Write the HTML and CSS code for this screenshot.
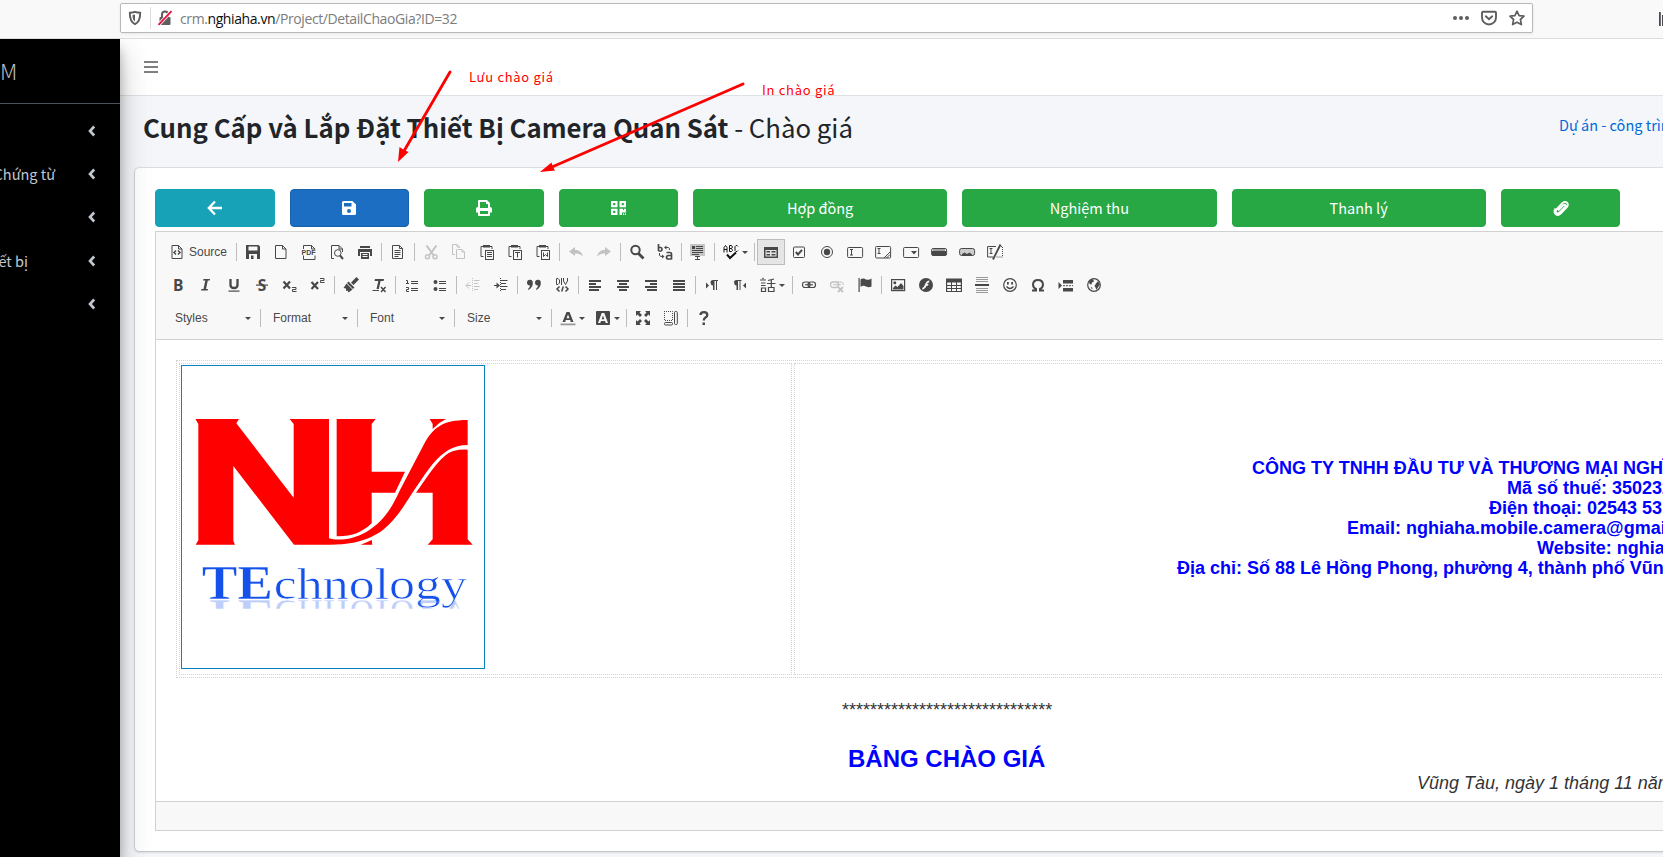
FILE: index.html
```html
<!DOCTYPE html>
<html lang="vi">
<head>
<meta charset="utf-8">
<title>Chào giá</title>
<link rel="stylesheet" href="styles.css">
</head>
<body>
<header class="browser">
  <div class="urlbar">
    <svg class="shield" width="14" height="16" viewBox="0 0 14 16"><path d="M7 1.8C5.200 2.500 3.500 2.700 1.800 2.800C1.700 8.500 3 12.300 7 14.200C11 12.300 12.300 8.500 12.200 2.800C10.500 2.700 8.800 2.500 7 1.800Z" fill="none" stroke="#5e5e5e" stroke-width="1.900"/><path d="M7 4.500V11.600C5.200 10.400 4.500 8.300 4.500 4.900Z" fill="#5e5e5e"/></svg>
    <i class="urlsep"></i>
    <svg class="lock" width="16" height="16" viewBox="0 0 16 16"><path d="M5 8V4.500A3 3 0 0 1 11 4.500V8" fill="none" stroke="#5e5e5e" stroke-width="2"/><rect x="2.500" y="7" width="11" height="8" rx="1" fill="#5e5e5e"/><path d="M1 15.500L14.500 1" stroke="#fff" stroke-width="3.400"/><path d="M1.500 14.800L14.500 1.200" stroke="#e8113f" stroke-width="1.900"/></svg>
    <span class="url">crm.<b>nghiaha.vn</b>/Project/DetailChaoGia?ID=32</span>
    <span class="urlicons">
      <svg width="16" height="16" viewBox="0 0 16 16" fill="#5e5e5e"><circle cx="2" cy="8" r="2"/><circle cx="8" cy="8" r="2"/><circle cx="14" cy="8" r="2"/></svg>
      <svg width="16" height="16" viewBox="0 0 16 16" fill="none" stroke="#5e5e5e" stroke-width="1.900" stroke-linecap="round"><path d="M2 1.800H14Q15 1.800 15 2.800V7.500A7 7 0 0 1 1 7.500V2.800Q1 1.800 2 1.800Z"/><path d="M4.800 6.300L8 9.300L11.200 6.300"/></svg>
      <svg width="16" height="16" viewBox="0 0 16 16" fill="none" stroke="#5e5e5e" stroke-width="1.700" stroke-linejoin="round"><path d="M8 1.200L10.100 5.600L15 6.200L11.400 9.500L12.400 14.600L8 12.200L3.600 14.600L4.600 9.500L1 6.200L5.900 5.600Z"/></svg>
    </span>
  </div>
  <svg class="library" width="8" height="16" viewBox="0 0 8 16" fill="#4a4a4f"><path d="M0 1H1.800V15H0ZM3 4H4.800V15H3Z"/></svg>
</header>
<div class="app">
  <aside class="sidebar">
    <div class="brand">M</div>
    <nav>
      <div class="item"><span></span><svg width="8" height="12" viewBox="0 0 8 12"><path d="M6.200 1.500L2 6L6.200 10.500"/></svg></div>
      <div class="item"><span>Chứng từ</span><svg width="8" height="12" viewBox="0 0 8 12"><path d="M6.200 1.500L2 6L6.200 10.500"/></svg></div>
      <div class="item"><span></span><svg width="8" height="12" viewBox="0 0 8 12"><path d="M6.200 1.500L2 6L6.200 10.500"/></svg></div>
      <div class="item short"><span>ết bị</span><svg width="8" height="12" viewBox="0 0 8 12"><path d="M6.200 1.500L2 6L6.200 10.500"/></svg></div>
      <div class="item"><span></span><svg width="8" height="12" viewBox="0 0 8 12"><path d="M6.200 1.500L2 6L6.200 10.500"/></svg></div>
    </nav>
  </aside>
  <main class="main">
    <div class="navbar"><svg width="14" height="14" viewBox="0 0 14 14" fill="#7f7f7f"><path d="M0 1H14V3H0ZM0 6H14V8H0ZM0 11H14V13H0Z"/></svg></div>
    <div class="heading">
      <h1><b>Cung Cấp và Lắp Đặt Thiết Bị Camera Quan Sát</b><span> - Chào giá</span></h1>
      <a class="crumb">Dự án - công trình</a>
    </div>
    <section class="card">
      <div class="actions">
        <button class="btn teal"><svg width="16" height="16" viewBox="0 0 16 16"><path d="M8 1.500L1.800 8L8 14.500M2 8H15" fill="none" stroke="#fff" stroke-width="2.300"/></svg></button>
        <button class="btn blue"><svg width="14" height="14" viewBox="0 0 14 14"><path fill="#fff" fill-rule="evenodd" d="M1.500 0H10.400L14 3.600V12.500Q14 14 12.500 14H1.500Q0 14 0 12.500V1.500Q0 0 1.500 0ZM2 2V5.500H9.500V2ZM7 8A2 2 0 1 0 7 12A2 2 0 1 0 7 8Z"/></svg></button>
        <button class="btn"><svg width="16" height="16" viewBox="0 0 16 16"><path fill="#fff" fill-rule="evenodd" d="M2 7V1Q2 0 3 0H11L14 3V7Q16 7 16 9V12.500H14V15Q14 16 13 16H3Q2 16 2 15V12.500H0V9Q0 7 2 7ZM4 2V8H12V4H10V2ZM4 11V14H12V11Z"/></svg></button>
        <button class="btn"><svg width="15" height="14" viewBox="0 0 15 14"><path fill="#fff" fill-rule="evenodd" d="M0 0H6.500V6.200H0ZM2.200 2V4.200H4.300V2ZM8.500 0H15V6.200H8.500ZM10.700 2V4.200H12.800V2ZM0 7.800H6.500V14H0ZM2.200 9.800V12H4.300V9.800ZM8.500 7.800H12V9H13V7.800H15V11.500H11V14H8.500ZM12 12.500H13.200V14H12ZM14 12.500H15V14H14Z"/></svg></button>
        <button class="btn wide">Hợp đồng</button>
        <button class="btn wide">Nghiệm thu</button>
        <button class="btn wide">Thanh lý</button>
        <button class="btn"><svg width="16" height="16" viewBox="0 0 16 16"><path d="M5 10.500L10.300 5.200Q11.600 4.200 12.300 5Q12.900 5.900 12 6.900L6.500 12.600Q4.800 14 3.300 12.800Q2 11.300 3.300 9.600L9.500 3Q12 .900 14 2.700Q15.700 4.800 13.800 7.200L7.600 13.600Q5 16 2.600 14Q.400 11.500 2.500 8.500" fill="none" stroke="#fff" stroke-width="1.900"/></svg></button>
      </div>
      <div class="editor">
        <div class="toolbar">
          <div class="row">
            <span class="src"><svg viewBox="0 0 16 16"><path class="l" d="M3 1.500H9.500L13 5V14.500H3ZM9.500 1.500V5H13"/><path class="l" stroke-width="1.500" d="M7 6.500L5 8.500L7 10.500M9 6.500L11 8.500L9 10.500"/></svg>Source</span><i class="sep"></i>
            <span class="b"><svg viewBox="0 0 16 16"><path fill-rule="evenodd" d="M1 1H13.500L15 2.500V15H1ZM3.500 2.500V6.500H12.500V2.500ZM4 10V15H6V11.500H8.500V15H12V10Z"/></svg></span>
            <span class="b"><svg viewBox="0 0 16 16"><path class="l" d="M2.500 1.500H9.500L13 5V14.500H2.500ZM9.500 1.500V5H13"/></svg></span>
            <span class="b"><svg viewBox="0 0 16 16"><path class="l" d="M2.500 5V1.500H10.500L14 5V5.500M10.500 1.500V5H14M2.500 11.500V15.500H14V11.500"/><text x=".500" y="10.500" font-size="6.500" font-weight="700" textLength="14" lengthAdjust="spacingAndGlyphs">PDF</text></svg></span>
            <span class="b"><svg viewBox="0 0 16 16"><path class="l" d="M5 14.500H2.500V1.500H10L13.500 5V8M10 1.500V5H13.500"/><circle class="l" cx="8.800" cy="9" r="3.300"/><path class="l" d="M11 11.500L14 15" stroke-width="2"/></svg></span>
            <span class="b"><svg viewBox="0 0 16 16"><path fill-rule="evenodd" d="M3 2H13V4H3ZM1 5H15V12H13V8H3V12H1ZM4 9H12V15H4ZM5.500 10V11H10.500V10ZM5.500 12V13H10.500V12Z"/></svg></span><i class="sep"></i>
            <span class="b"><svg viewBox="0 0 16 16"><path class="l" d="M2.500 1.500H9.500L12.500 4.500V14.500H2.500ZM9.500 1.500V4.500H12.500M4.500 6.500H10.500M4.500 8.500H10.500M4.500 10.500H10.500M4.500 12.500H8.500"/></svg></span><i class="sep"></i>
            <span class="b off"><svg viewBox="0 0 16 16"><path class="l" d="M3.500 1.500L10.500 11M13.500 1.500L6.500 11" stroke-width="2"/><circle class="l" cx="4.500" cy="12.700" r="2" stroke-width="1.500"/><circle class="l" cx="12" cy="12.700" r="2" stroke-width="1.500"/></svg></span>
            <span class="b off"><svg viewBox="0 0 16 16"><path class="l" d="M1.500 10.500V.500H6L8.500 3V4M6 .500V3H8.500M6.500 5.500H11L13.500 8V14.500H5.500V5.500M11 5.500V8H13.500M1.500 10.500H4"/></svg></span>
            <span class="b"><svg viewBox="0 0 16 16"><path class="l" d="M4 2.500H2V12.500H4.500M11 2.500H13V5"/><path d="M4 1H11V3.500H4Z"/><rect class="l" x="6.500" y="6.500" width="8" height="9"/><path class="l" d="M8 8.500H13M8 10.500H13M8 12.500H13"/></svg></span>
            <span class="b"><svg viewBox="0 0 16 16"><path class="l" d="M4 2.500H2V12.500H4.500M11 2.500H13V5"/><path d="M4 1H11V3.500H4Z"/><rect class="l" x="6.500" y="6.500" width="8" height="9"/><path class="l" d="M8 8.500H13M10.500 8.500V13.500"/></svg></span>
            <span class="b"><svg viewBox="0 0 16 16"><path class="l" d="M4 2.500H2V12.500H4.500M11 2.500H13V5"/><path d="M4 1H11V3.500H4Z"/><rect class="l" x="6.500" y="6.500" width="8" height="9"/><path class="l" d="M8.500 8.500V12.500L10.500 10.500L12.500 12.500V8.500"/></svg></span><i class="sep"></i>
            <span class="b off"><svg viewBox="0 0 16 16"><path d="M1 7.500L7 3V6C11 6 14 8 15 12.500C12.500 10 10 9.500 7 9.500V12Z"/></svg></span>
            <span class="b off"><svg viewBox="0 0 16 16"><path d="M15 7.500L9 3V6C5 6 2 8 1 12.500C3.500 10 6 9.500 9 9.500V12Z"/></svg></span><i class="sep"></i>
            <span class="b"><svg viewBox="0 0 16 16"><circle class="l" cx="6.500" cy="6" r="4.200" stroke-width="2"/><path class="l" d="M9.500 9.500L14.500 14.500" stroke-width="2.800"/></svg></span>
            <span class="b"><svg viewBox="0 0 16 16"><path class="l" d="M1.500 0V7M1.500 3.500H3.800Q5 3.500 5 5.200Q5 7 3.800 7H1.500M9.500 8.500H13Q14.500 8.500 14.500 10V15.500M14.500 11.500H11.500Q9.500 11.500 9.500 13.200Q9.500 15 11.500 15H14.500" stroke-width="1.700"/><path class="l" d="M8 3.500H11.500Q12.500 3.500 12.500 6M2.500 9V11Q2.500 12.500 5 12.500H6"/><path d="M7 3.500L9.500 1.500V5.500ZM7.500 12.500L5 10.500V14.500Z"/></svg></span><i class="sep"></i>
            <span class="b"><svg viewBox="0 0 16 16"><path class="pale" d="M0 0H15V12H0Z"/><path d="M2 2H5V5H2ZM6 2H13V3H6ZM6 4H13V5H6ZM2 6H13V7H2ZM2 8H13V9H2ZM2 10H9V11H2ZM5 12H10V13H8V15H10V16H5V15H7V13H5Z"/></svg></span><i class="sep"></i>
            <span class="b drop"><svg viewBox="0 0 16 16"><path class="l dark" d="M1 8.500V3.500L2.500 1.500L4 3.500V8.500M1 5.500H4M6.500 1.500V7.500H8.500L9.500 6.500L8.500 4.500L9.500 3L8.500 1.500H6.500M6.500 4.500H8.500M15 2.500L14 1.500H13L12 2.500V6.500L13 7.500H14L15 6.500"/><path class="l dark" d="M4 10.500L7 14L13 8.500" stroke-width="2"/></svg><em></em></span><i class="sep"></i>
            <span class="b on"><svg viewBox="0 0 16 16"><path fill-rule="evenodd" d="M1 3H15V14H1ZM2.500 6V12.500H13.500V6Z"/><path d="M3.500 7H7V8.500H3.500ZM3.500 10H7V11.500H3.500ZM8.500 7H12.500V8.500H8.500ZM8.500 10H12.500V11.500H8.500Z"/></svg></span>
            <span class="b"><svg viewBox="0 0 16 16"><rect class="l" x="2.500" y="3" width="11" height="10.500" rx="1"/><path class="l" d="M4.800 8L7 10.500L11 5.800" stroke-width="2"/></svg></span>
            <span class="b"><svg viewBox="0 0 16 16"><circle class="l" cx="8" cy="8" r="5.500"/><circle cx="8" cy="8" r="3.200"/></svg></span>
            <span class="b"><svg viewBox="0 0 16 16"><rect class="l" x=".600" y="3.500" width="15" height="10" rx="1"/><path class="l" d="M3 5.500H6M3 11H6M4.500 5.500V11"/></svg></span>
            <span class="b"><svg viewBox="0 0 16 16"><rect class="l" x=".600" y="2.500" width="15" height="11.500" rx="1"/><path class="l" d="M2.500 4.500H5.500M2.500 9.500H5.500M4 4.500V9.500M9 14L15 8M11.500 14L15 10.500"/></svg></span>
            <span class="b"><svg viewBox="0 0 16 16"><rect class="l" x=".600" y="3.500" width="15" height="10" rx="1"/><path d="M8 7H14L11 10.500Z"/></svg></span>
            <span class="b"><svg viewBox="0 0 16 16"><rect class="l" x=".600" y="4.500" width="15" height="7" rx="1.500"/><path d="M1 7H15V11.500H1ZM2 5.500H14V6.500H2Z"/></svg></span>
            <span class="b"><svg viewBox="0 0 16 16"><rect class="l palefill" x=".600" y="4.500" width="15" height="7" rx="2"/><path d="M3 11.500V10L5.500 8.500L8 10L10.500 8.500L13 10.500V11.500Z"/></svg></span>
            <span class="b"><svg viewBox="0 0 16 16"><path class="l" d="M9 2.500H.600V13H6M2.500 4.500H5.500M2.500 9.500H5.500M4 4.500V9.500"/><path class="l" d="M13.500 .500L6 15.500" stroke-width="1.800"/><path class="l" stroke-dasharray="1 1" d="M14 2.500H15.500V13H9"/></svg></span>
          </div>
          <div class="row">
            <span class="b"><svg viewBox="0 0 16 16"><text class="fat" x="3" y="13.700">B</text></svg></span>
            <span class="b"><svg viewBox="0 0 16 16"><path d="M5.500 2H12L11.700 3.500H9.800L8 12H10L9.600 13.500H3L3.400 12H5.500L7.300 3.500H5Z"/></svg></span>
            <span class="b"><svg viewBox="0 0 16 16"><path class="l" stroke-width="2.300" d="M4.500 2V8Q4.500 11 8 11Q11.500 11 11.500 8V2"/><path d="M2.500 13.500H13.500V14.700H2.500Z"/></svg></span>
            <span class="b"><svg viewBox="0 0 16 16"><text class="fat" x="3.700" y="13.700">S</text><path d="M2 7.500H14V8.700H2Z"/></svg></span>
            <span class="b"><svg viewBox="0 0 16 16"><path class="l" stroke-width="2.200" d="M1.500 4.500L8 11.500M8 4.500L1.500 11.500"/><path class="l" d="M10 10.500H14V12.500H10.500V14.500H14.500"/></svg></span>
            <span class="b"><svg viewBox="0 0 16 16"><path class="l" stroke-width="2.200" d="M1.500 5L8 12M8 5L1.500 12"/><path class="l" d="M10 1.500H14V3.500H10.500V5.500H14.500"/></svg></span><i class="sep"></i>
            <span class="b"><svg viewBox="0 0 16 16"><path d="M13.500 0L16 2.500L10.500 8L8 5.500ZM5.500 4.500L11.500 10.500L10 12L4 6ZM3.500 6.500L9.500 12.500L5.500 15.500L4.500 13.500L3 14L3 11.500L.500 11Z"/></svg></span>
            <span class="b"><svg viewBox="0 0 16 16"><path d="M4 2H13L12.600 4H9.600L7.800 12H5.500L7.300 4H3.600ZM1.500 13H8V14H1.500Z"/><path class="l" stroke-width="1.500" d="M10 10L14.500 15M14.500 10L10 15"/></svg></span><i class="sep"></i>
            <span class="b"><svg viewBox="0 0 16 16"><path class="l" d="M2 3.500H3.500V6.500M2 6.500H5M2 10.500H4.500V12.500H2.500V14.500H5M7 4.500H14M7 6.500H14M7 11.500H14M7 13.500H14"/></svg></span>
            <span class="b"><svg viewBox="0 0 16 16"><circle cx="3.500" cy="5" r="2"/><circle cx="3.500" cy="12" r="2"/><path class="l" d="M7 4.500H14M7 6.500H14M7 11.500H14M7 13.500H14"/></svg></span><i class="sep"></i>
            <span class="b off"><svg viewBox="0 0 16 16"><path class="l" stroke-dasharray="1 1" d="M7.500 1V15"/><path class="l" d="M9 3.500H14.500M9 6.500H13M9 9.500H14.500M9 12.500H13M1 8.500H6M4 5.500L1 8.500L4 11.500"/></svg></span>
            <span class="b"><svg viewBox="0 0 16 16"><path class="l" stroke-dasharray="1 1" d="M7.500 1V15"/><path class="l" d="M8 3.500H14.500M8 6.500H13M8 9.500H14.500M8 12.500H13M1 8.500H5"/><path d="M3.500 5.500L7 8.500L3.500 11.500Z"/></svg></span><i class="sep"></i>
            <span class="b"><svg viewBox="0 0 16 16"><path d="M1 5.500A2.700 2.700 0 0 1 6.800 6Q7 10 2.500 13L2 12Q4 10 4 8.500Q1 8.500 1 5.500ZM9 5.500A2.700 2.700 0 0 1 14.800 6Q15 10 10.500 13L10 12Q12 10 12 8.500Q9 8.500 9 5.500Z"/></svg></span>
            <span class="b"><svg viewBox="0 0 16 16"><path class="l" d="M2.500 1.500V7.500H4L5.500 6V3L4 1.500ZM7.500 1V8M9.500 1V4L11.500 7.500L13.500 4V1"/><path class="l" stroke-width="1.500" d="M5.500 9.500L3 12L5.500 14.500M11.500 9.500L14 12L11.500 14.500M9.300 9.500L7.700 14.500"/></svg></span><i class="sep"></i>
            <span class="b"><svg viewBox="0 0 16 16"><path d="M2 3H14V5H2ZM2 6H9V8H2ZM2 9H14V11H2ZM2 12H12V14H2Z"/></svg></span>
            <span class="b"><svg viewBox="0 0 16 16"><path d="M2 3H14V5H2ZM4 6H12V8H4ZM2 9H14V11H2ZM4 12H12V14H4Z"/></svg></span>
            <span class="b"><svg viewBox="0 0 16 16"><path d="M2 3H14V5H2ZM7 6H14V8H7ZM2 9H14V11H2ZM4 12H14V14H4Z"/></svg></span>
            <span class="b"><svg viewBox="0 0 16 16"><path d="M2 3H14V5H2ZM2 6H14V8H2ZM2 9H14V11H2ZM2 12H14V14H2Z"/></svg></span><i class="sep"></i>
            <span class="b"><svg viewBox="0 0 16 16"><path d="M2 5.500L5 8.500L2 11.500ZM9 8.500Q6.500 8 6.500 5.500Q6.500 3 9 3H14V4H13V13H12V4H10.500V13H9Z"/></svg></span>
            <span class="b"><svg viewBox="0 0 16 16"><path d="M14 5.500L11 8.500L14 11.500ZM4.500 8.500Q2 8 2 5.500Q2 3 4.500 3H9.500V4H8.500V13H7.500V4H6V13H4.500Z"/></svg></span>
            <span class="b drop"><svg viewBox="0 0 16 16"><path class="l" stroke-width="1.200" d="M0 3H6M1 6H5.500M1 8.500H5.500M1.500 14.500V11H5.500V14.500ZM14 2L8 3.500M7 6.500H15.500M11.300 3V10M8.500 14.500V10.500H14V14.500ZM2.500 1L3.500 2"/></svg><em></em></span><i class="sep"></i>
            <span class="b"><svg viewBox="0 0 16 16"><rect class="l" x="1.500" y="5" width="7.500" height="5.500" rx="2.500" stroke-width="1.200"/><rect class="l" x="7" y="5" width="7.500" height="5.500" rx="2.500" stroke-width="1.200"/><path d="M4 7.200H12V8.300H4Z"/></svg></span>
            <span class="b off"><svg viewBox="0 0 16 16"><rect class="l" x="1.500" y="5" width="8" height="5.500" rx="2.500" stroke-width="1.300"/><path class="l" d="M8 5H12Q14.500 5 14.500 8M4 7.700H12"/><path class="l" stroke-width="1.800" d="M9 10L14 15M14 10L9 15"/></svg></span>
            <span class="b"><svg viewBox="0 0 16 16"><path d="M1.500 1H2.700V15H1.500ZM3.500 2.500Q6 .500 9 2.500Q12 3.500 14.500 1.500V9.500Q12 11 9 9.500Q6 8 3.500 10Z"/></svg></span><i class="sep"></i>
            <span class="b"><svg viewBox="0 0 16 16"><rect class="l" x="1.600" y="2.600" width="13" height="11" stroke-width="1.200"/><circle cx="4.800" cy="5.800" r="1.500"/><path d="M3 12.500V11L5.500 8.500L7.500 10L11 6L13.500 9V12.500Z"/></svg></span>
            <span class="b"><svg viewBox="0 0 16 16"><path fill-rule="evenodd" d="M8 1A7 7 0 1 0 8 15A7 7 0 1 0 8 1ZM11.500 3.500L11 5.500Q9.500 5.500 9 7H10.500L10 8.700H8.500Q7.500 12 4 12.500L4.500 10.700Q6 10.500 7 7.500Q8.500 3.500 11.500 3.500Z"/></svg></span>
            <span class="b"><svg viewBox="0 0 16 16"><path fill-rule="evenodd" d="M0 1.500H16V15H0ZM1.200 5.500V8H5V5.500ZM6 5.500V8H10V5.500ZM11 5.500V8H14.800V5.500ZM1.200 9V11H5V9ZM6 9V11H10V9ZM11 9V11H14.800V9ZM1.200 12V14H5V12ZM6 12V14H10V12ZM11 12V14H14.800V12Z"/></svg></span>
            <span class="b"><svg viewBox="0 0 16 16"><path d="M1 7H15V9H1Z"/><path class="mid" d="M2 0H14V1H2ZM2 2H14V3H2ZM2 4H14V5H2ZM2 11H14V12H2ZM2 13H14V14H2ZM2 15H14V16H2Z"/></svg></span>
            <span class="b"><svg viewBox="0 0 16 16"><circle class="l" cx="8" cy="8" r="6.300" stroke-width="1.200"/><path d="M5 5H6.800V7.500H5ZM9.200 5H11V7.500H9.200Z"/><path class="l" d="M4.500 9.500Q8 13.500 11.500 9.500" stroke-width="1.300"/></svg></span>
            <span class="b"><svg viewBox="0 0 16 16"><path class="l" stroke-width="2" d="M2 13.500H6V12Q3 10.500 3 7.500Q3.300 3 8 3Q12.700 3 13 7.500Q13 10.500 10 12V13.500H14"/></svg></span>
            <span class="b"><svg viewBox="0 0 16 16"><path d="M.500 5L4 8.500L.500 12ZM5 3H15V6.500H5ZM5 11H15V14.500H5Z"/><path class="l" stroke-dasharray="2 1" d="M5 8.700H15"/></svg></span>
            <span class="b"><svg viewBox="0 0 16 16"><circle class="l" cx="8" cy="8" r="6.300" stroke-width="1.200"/><path d="M3 4L7 2L8 4.500L6 5.500L5.500 7.500L3.500 7ZM10 6.500L12 4L14 7.500L12.500 9.500L10.500 13L9.500 10.500L8.500 9ZM4.500 9.500L6.500 11L6 12.500Z"/></svg></span>
          </div>
          <div class="row styles">
            <span class="combo">Styles<em></em></span><i class="sep"></i>
            <span class="combo">Format<em></em></span><i class="sep"></i>
            <span class="combo">Font<em></em></span><i class="sep"></i>
            <span class="combo">Size<em></em></span><i class="sep"></i>
            <span class="b drop"><svg viewBox="0 0 16 16"><path fill-rule="evenodd" d="M6.500 2H9.500L13.500 12H10.800L10.200 10H5.800L5.200 12H2.500ZM8 4.500L6.500 8.200H9.500Z"/><path class="mid" d="M.500 13.500H15.500V15.300H.500Z"/></svg><em></em></span>
            <span class="b drop"><svg viewBox="0 0 16 16"><path fill-rule="evenodd" d="M2 1H14Q15 1 15 2V14Q15 15 14 15H2Q1 15 1 14V2Q1 1 2 1ZM6.700 3L3 13H5.300L6 11H10L10.700 13H13L9.300 3ZM8 5.500L9.300 9.300H6.700Z"/></svg><em></em></span><i class="sep"></i>
            <span class="b"><svg viewBox="0 0 16 16"><path d="M1 1H6L4.500 2.500L7 5L5 7L2.500 4.500L1 6ZM15 1V6L13.500 4.500L11 7L9 5L11.500 2.500L10 1ZM1 15V10L2.500 11.500L5 9L7 11L4.500 13.500L6 15ZM15 15H10L11.500 13.500L9 11L11 9L13.500 11.500L15 10Z"/></svg></span>
            <span class="b"><svg viewBox="0 0 16 16"><path class="l" stroke-dasharray="1 1" d="M1 1.500H9.500V10.500H1.500V1"/><rect class="l" x="1.500" y="12.500" width="8" height="2.500" rx="1"/><rect class="l" x="11.500" y="1.500" width="2.800" height="13" rx="1"/></svg></span><i class="sep"></i>
            <span class="b"><svg viewBox="0 0 16 16"><path class="l" stroke-width="2.300" d="M4.500 5Q4.500 2.200 8 2.200Q11.300 2.200 11.300 5Q11.300 6.500 9.500 7.500Q7.800 8.500 7.800 10.500"/><path d="M6.500 12.500H9V15H6.500Z"/></svg></span>
          </div>
        </div>
        <div class="page">
          <div class="sheet">
            <div class="cell left">
              <svg class="logo" viewBox="36 33 906 906">
                <defs>
                  <clipPath id="fade"><rect x="80" y="735" width="790" height="26"/></clipPath>
                  <g id="word"><text class="te" x="95" y="733" textLength="214" lengthAdjust="spacingAndGlyphs">TE</text><text class="chn" x="311" y="733" textLength="580" lengthAdjust="spacingAndGlyphs">chnology</text></g>
                </defs>
                <g fill="#f00">
                  <path d="M76 192H207L199 205L371 428V207L359 192H477V550C500 557 545 556 590 530C640 500 665 460 690 405L765 262C790 220 815 195 893 195V270C850 270 820 290 790 325C760 362 730 410 700 455C670 500 640 530 605 545C575 560 530 569 480 569H372L190 333V557L195 569H77L85 556V207Z"/>
                  <path d="M500 192H617L605 207V350H705L675 413H605V505C575 533 545 545 500 544Z"/>
                  <path d="M779 192H828Q805 203 788 222V207Z"/>
                  <path d="M893 284V553L908 569H773L788 553V413H738C770 370 810 300 850 288Q870 283 893 284Z"/>
                  <path d="M605 553L607 569H572Q590 563 605 555Z"/>
                </g>
                <use href="#word"/>
                <g clip-path="url(#fade)" opacity=".28"><use href="#word" transform="translate(0 1468) scale(1 -1)"/></g>
              </svg>
            </div>
            <div class="cell right">
              <p class="l1">CÔNG TY TNHH ĐẦU TƯ VÀ THƯƠNG MẠI NGHĨA HÀ</p>
              <p class="l2">Mã số thuế: 350232</p>
              <p class="l3">Điện thoại: 02543 53</p>
              <p class="l4">Email: nghiaha.mobile.camera@gmail.com</p>
              <p class="l5">Website: nghiaha.vn</p>
              <p class="l6">Địa chỉ: Số 88 Lê Hồng Phong, phường 4, thành phố Vũng Tàu</p>
            </div>
          </div>
          <p class="stars">******************************</p>
          <h2>BẢNG CHÀO GIÁ</h2>
          <p class="date">Vũng Tàu, ngày 1 tháng 11 năm</p>
        </div>
        <div class="foot"></div>
      </div>
    </section>
  </main>
</div>
<svg class="arrows" width="1663" height="240" viewBox="0 0 1663 240" fill="#f00" stroke="#f00"><path d="M450 72L404 151M743 84L552 167" stroke-width="2.800" stroke-linecap="round" fill="none"/><path stroke="none" d="M398 162L399.500 147L404 150L408.500 152ZM540 172L551.500 162.500L553 167L555 170.500Z"/></svg>
<span class="note n1">Lưu chào giá</span>
<span class="note n2">In chào giá</span>
</body>
</html>
```
FILE: styles.css
```css
* { box-sizing: border-box; }
html { height: 857px; overflow: hidden; }
body { margin: 0; width: 1663px; height: 857px; overflow: hidden; position: relative; background: #f4f6f9; color: #212529; font: 14.5px "Noto Sans CJK SC", sans-serif; }
p, h1, h2 { margin: 0; }
svg { display: block; flex: none; }

.browser { position: relative; z-index: 3; height: 39px; padding: 3px 0 0 120px; display: flex; background: #f9f9fa; border-bottom: 1px solid #dcdcdd; }
.urlbar { flex: none; width: 1413px; height: 30px; display: flex; align-items: center; padding: 0 7px 0 7px; background: #fff; border: 1px solid #b8b8ba; border-radius: 2px; box-shadow: 0 1px 3px rgba(0,0,0,.08); }
.urlsep { width: 1px; height: 22px; background: #dedede; margin: 0 6px 0 8px; }
.url { margin-left: 7px; padding-top: 2px; font: 14px/20px "Open Sans", sans-serif; letter-spacing: -.400px; color: #7c7c7c; white-space: nowrap; }
.url b { font-weight: 400; color: #0c0c0d; }
.urlicons { display: flex; gap: 12px; margin-left: auto; }
.library { margin: 8px 0 0 126px; }

.app { display: flex; height: 818px; overflow: hidden; }
.sidebar { position: relative; z-index: 2; flex: none; width: 120px; background: #000; color: #c2c7d0; box-shadow: 0 14px 28px rgba(0,0,0,.25), 0 10px 10px rgba(0,0,0,.22); }
.brand { height: 65px; border-bottom: 1px solid #4b545c; line-height: 63px; font-size: 22px; font-weight: 300; color: #b8bbc0; }
.sidebar nav { padding-top: 5px; }
.item { height: 43.300px; display: flex; align-items: center; justify-content: space-between; padding: 0 24px 0 0; white-space: nowrap; }
.item span { display: flex; justify-content: flex-end; width: 55px; }
.item.short span { width: 28px; }
.item svg path { fill: none; stroke: #c2c7d0; stroke-width: 2.600; }

.main { flex: none; width: 1543px; overflow: hidden; }
.navbar { height: 57px; padding: 21px 0 0 24px; background: #fff; border-bottom: 1px solid #dee2e6; }
.heading { height: 72px; display: flex; padding: 0 0 0 23px; white-space: nowrap; }
h1 { flex: none; width: 1416px; font-size: 25.750px; line-height: 36px; padding-top: 13px; font-weight: 400; }
.crumb { color: #0069d9; line-height: 24px; padding-top: 17px; }

.card { margin-left: 15px; width: 1600px; height: 683px; padding: 20px 0 0 20px; background: #fff; border-radius: 4px; box-shadow: 0 0 1px rgba(0,0,0,.125), 0 1px 3px rgba(0,0,0,.2), 0 0 0 .500px rgba(0,0,0,.12); }
.actions { display: flex; gap: 15px; height: 43px; padding-top: 1px; }
.btn { flex: none; width: 119.500px; height: 38px; padding: 0; display: flex; align-items: center; justify-content: center; border: 1px solid #28a745; border-radius: 4px; background: #28a745; color: #fff; font: 14.500px/20px "Noto Sans CJK SC", sans-serif; }
.btn.wide { width: 254.250px; }
.btn.teal { background: #17a2b8; border-color: #17a2b8; }
.btn.blue { background: #1b6ec2; border-color: #1861ac; }

.editor { width: 1560px; height: 600px; border: 1px solid #d1d1d1; }
.toolbar { height: 108px; padding: 6px 0 0 8px; display: flex; flex-direction: column; gap: 5px; background: #f8f8f8; border-bottom: 1px solid #d1d1d1; color: #484848; font: 12px "Liberation Sans", Arial, sans-serif; }
.row { display: flex; height: 28px; align-items: center; }
.row.styles { padding-left: 1px; }
.row svg { width: 16px; height: 16px; fill: #484848; overflow: visible; font-family: "Liberation Sans", Arial, sans-serif; }
.row .l { fill: none; stroke: #484848; }
.row .dark { stroke: #111; }
.row .pale { fill: #c6c6c6; }
.row .palefill { fill: #ccc; }
.row .mid { fill: #999; }
.fat { font: 700 15.500px "Open Sans", sans-serif; }
.b { flex: none; width: 28px; height: 26px; display: flex; align-items: center; justify-content: center; }
.b.on { background: #e5e5e5; border: 1px solid #bcbcbc; }
.b.off { opacity: .3; }
.b.drop { width: 35.600px; justify-content: flex-start; padding-left: 6px; gap: 3px; }
.row em { flex: none; border: 3px solid transparent; border-top-color: #484848; border-bottom: 0; }
.src { width: 69.800px; display: flex; align-items: center; padding-left: 5px; gap: 4px; }
.sep { flex: none; width: 1px; height: 18px; margin: 0 2px; background: #bcbcbc; }
.combo { width: 92px; display: flex; align-items: center; justify-content: space-between; padding: 0 7px 0 10px; }
.combo:first-child { width: 93px; }
.styles .b.drop { width: 35px; }

.page { height: 461px; padding: 20px 0 0 20px; background: #fff; overflow: hidden; font: 18px/20px "Liberation Sans", Arial, sans-serif; color: #333; }
.sheet { width: 1540px; height: 318px; padding: 2px; display: flex; gap: 2px; border: 1px dotted #d3d3d3; }
.cell { height: 312px; border: 1px dotted #d3d3d3; }
.cell.left { width: 613px; padding: 1px; flex: none; }
.cell.right { flex: 1; padding-top: 94px; font-weight: 700; color: #00f; white-space: nowrap; }
.logo { width: 304px; height: 304px; border: 1px solid #0782c1; }
.te, .chn { font-family: "Liberation Serif", serif; fill: #1450ea; stroke: #fff; stroke-width: 1.500px; font-size: 143px; }
.te { font-weight: 700; }
.chn { font-size: 136px; stroke-width: 2px; }
.l1 { padding-left: 457px; }
.l2 { padding-left: 712px; }
.l3 { padding-left: 694px; }
.l4 { padding-left: 552px; }
.l5 { padding-left: 742px; }
.l6 { padding-left: 382px; }
.stars { padding: 22px 0 0 666px; }
h2 { padding: 25px 0 0 672px; font-size: 24px; line-height: 28px; color: #00f; white-space: nowrap; }
.date { padding: 0 0 0 1241px; font-style: italic; white-space: nowrap; }
.foot { height: 29px; background: #f8f8f8; border-top: 1px solid #d1d1d1; }

.arrows { position: absolute; left: 0; top: 0; z-index: 4; }
.note { position: absolute; z-index: 4; color: #f00; font-size: 13px; line-height: 20px; letter-spacing: .700px; white-space: nowrap; }
.n1 { left: 469px; top: 67px; }
.n2 { left: 762px; top: 80px; }
```
